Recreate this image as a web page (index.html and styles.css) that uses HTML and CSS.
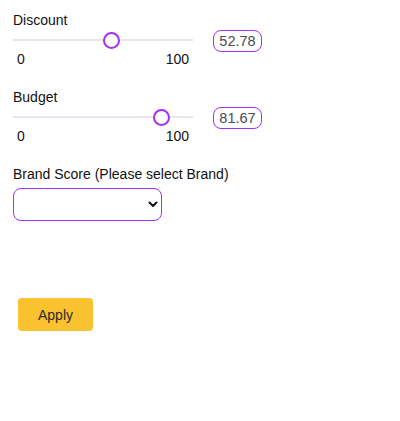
FILE: index.html
```html
<!DOCTYPE html>
<html>
<head>
<meta charset="utf-8">
<link rel="stylesheet" href="styles.css">
</head>
<body>
<div class="panel">
  <div class="field">
    <div class="label">Discount</div>
    <div class="slider-row">
      <div class="slider">
        <div class="track"></div>
        <div class="thumb" style="left: 90px"></div>
      </div>
      <div class="value">52.78</div>
    </div>
    <div class="ticks"><span>0</span><span>100</span></div>
  </div>
  <div class="field">
    <div class="label">Budget</div>
    <div class="slider-row">
      <div class="slider">
        <div class="track"></div>
        <div class="thumb" style="left: 140px"></div>
      </div>
      <div class="value">81.67</div>
    </div>
    <div class="ticks"><span>0</span><span>100</span></div>
  </div>
  <div class="field brand">
    <div class="label">Brand Score (Please select Brand)</div>
    <div class="select">
      <svg class="chev" width="10" height="7" viewBox="0 0 10 7"><path d="M1.5 1.5 L5 5 L8.5 1.5" fill="none" stroke="#111" stroke-width="2" stroke-linecap="round" stroke-linejoin="round"/></svg>
    </div>
  </div>
  <div class="actions">
    <button class="apply">Apply</button>
  </div>
</div>
</body>
</html>
```

FILE: styles.css
```css
html, body {
  margin: 0;
  padding: 0;
  background: #ffffff;
}
body {
  font-family: "Liberation Sans", Arial, sans-serif;
  font-size: 14px;
  color: #111111;
}
.panel {
  padding: 12px 0 0 13px;
}
.field {
  display: flex;
  flex-direction: column;
}
.label {
  line-height: 17px;
}
.slider-row {
  display: flex;
  align-items: center;
  gap: 20px;
}
.slider {
  position: relative;
  width: 180px;
  height: 24px;
}
.track {
  position: absolute;
  left: 0;
  right: 0;
  top: 10px;
  height: 2px;
  background: #e6e6ec;
}
.thumb {
  position: absolute;
  top: 3px;
  width: 13px;
  height: 13px;
  border: 2px solid #a230f5;
  border-radius: 50%;
  background: #ffffff;
}
.value {
  width: 47px;
  height: 20px;
  border: 1.5px solid #a230f5;
  border-radius: 8px;
  color: #4a4a55;
  line-height: 20px;
  text-align: center;
  font-size: 14.5px;
}
.ticks {
  width: 172px;
  display: flex;
  justify-content: space-between;
  padding-left: 4px;
  line-height: 17px;
  margin-top: -2px;
}
.field + .field {
  margin-top: 21px;
}
.field.brand {
  margin-top: 21px;
}
.select {
  margin-top: 5px;
  width: 144px;
  height: 31px;
  border: 1.5px solid #a230f5;
  border-radius: 8px;
  display: flex;
  align-items: center;
  justify-content: flex-end;
  padding-right: 3px;
}
.chev {
  display: block;
}
.actions {
  margin-top: 77px;
  padding-left: 5px;
}
.apply {
  width: 75px;
  height: 33px;
  border: none;
  border-radius: 4px;
  background: #f9c22e;
  color: #2a2a2a;
  font-family: "Liberation Sans", Arial, sans-serif;
  font-size: 14px;
  padding: 0;
}
```
